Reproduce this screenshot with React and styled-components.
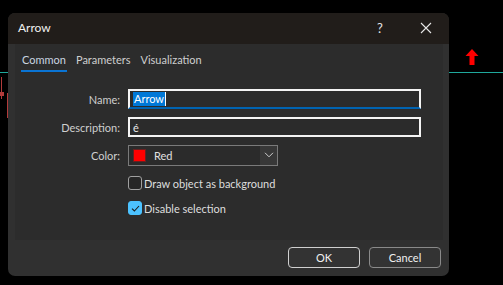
import React from "react";
import styled, { createGlobalStyle } from "styled-components";

const GlobalStyle = createGlobalStyle`
  html, body {
    margin: 0;
    background: #000;
    overflow: hidden;
  }
  * {
    box-sizing: border-box;
  }
`;

function ChartBackdrop() {
  return (
    <Chart width="503" height="285" viewBox="0 0 503 285">
      <line x1="0" y1="72.5" x2="503" y2="72.5" stroke="#1fa89c" strokeWidth="1" />
      <line x1="1.5" y1="77" x2="1.5" y2="99" stroke="#b23b3b" strokeWidth="1" />
      <rect x="0" y="92" width="4" height="4" fill="#b23b3b" />
      <rect x="7" y="93" width="2" height="25" fill="#b23b3b" />
      <path d="M472 49 L478.5 56 L474.5 56 L474.5 65 L469.5 65 L469.5 56 L465.5 56 Z" fill="#ff0000" />
    </Chart>
  );
}

function CloseIcon() {
  return (
    <svg width="12" height="12" viewBox="0 0 12 12">
      <path d="M1 1 L11 11 M11 1 L1 11" stroke="#e6e6e6" strokeWidth="1.1" />
    </svg>
  );
}

function Chevron() {
  return (
    <svg width="10" height="6" viewBox="0 0 10 6">
      <path d="M1 0.8 L5 4.8 L9 0.8" stroke="#cfcfcf" strokeWidth="1" fill="none" />
    </svg>
  );
}

function CheckMark() {
  return (
    <svg width="9" height="7" viewBox="0 0 9 7">
      <path d="M1 3.6 L3.4 6 L8 1" stroke="#1a1a1a" strokeWidth="1.1" fill="none" />
    </svg>
  );
}

export default function App() {
  return (
    <>
      <GlobalStyle />
      <Desktop>
        <ChartBackdrop />
        <Dialog>
          <TitleBar>
            <Title>Arrow</Title>
            <TitleButtons>
              <HelpButton>?</HelpButton>
              <CloseButton>
                <CloseIcon />
              </CloseButton>
            </TitleButtons>
          </TitleBar>
          <Panel>
            <Tabs>
              <Tab active>Common</Tab>
              <Tab>Parameters</Tab>
              <Tab>Visualization</Tab>
            </Tabs>
            <Form>
              <Label>Name:</Label>
              <TextField focused>
                <Selected>Arrow</Selected>
              </TextField>
              <Label>Description:</Label>
              <TextField>é</TextField>
              <Label>Color:</Label>
              <Select>
                <Swatch color="#ff0000" />
                <SelectText>Red</SelectText>
                <SelectArrow>
                  <Chevron />
                </SelectArrow>
              </Select>
              <span />
              <CheckRow>
                <CheckBox />
                <CheckLabel>Draw object as background</CheckLabel>
              </CheckRow>
              <span />
              <CheckRow>
                <CheckBox checked>
                  <CheckMark />
                </CheckBox>
                <CheckLabel>Disable selection</CheckLabel>
              </CheckRow>
            </Form>
          </Panel>
          <Footer>
            <Button primary>OK</Button>
            <Button>Cancel</Button>
          </Footer>
        </Dialog>
      </Desktop>
    </>
  );
}

const Desktop = styled.div`
  position: relative;
  width: 503px;
  height: 285px;
  background: #000;
  font-family: Lato, "Liberation Sans", sans-serif;
  font-size: 11px;
  color: #d6d6d6;
`;

const Chart = styled.svg`
  position: absolute;
  left: 0;
  top: 0;
`;

const Dialog = styled.div`
  position: absolute;
  left: 8px;
  top: 13px;
  width: 441px;
  height: 263px;
  border-radius: 7px;
  background: #303030;
  overflow: hidden;
  display: flex;
  flex-direction: column;
`;

const TitleBar = styled.div`
  height: 31px;
  flex: none;
  background: #211d1a;
  display: flex;
  align-items: center;
  justify-content: space-between;
  padding: 0 0 0 10px;
`;

const Title = styled.div`
  font-size: 12px;
  color: #f0f0f0;
  margin-top: -2px;
`;

const TitleButtons = styled.div`
  display: flex;
  align-items: center;
  height: 100%;
`;

const HelpButton = styled.div`
  width: 46px;
  text-align: center;
  font-size: 13px;
  color: #e6e6e6;
  margin-top: -2px;
`;

const CloseButton = styled.div`
  width: 46px;
  display: flex;
  justify-content: center;
  margin-top: -2px;
`;

const Panel = styled.div`
  margin: 0 6px 0 7px;
  height: 196px;
  flex: none;
  background: #2c2c2c;
  display: flex;
  flex-direction: column;
`;

const Tabs = styled.div`
  display: flex;
  gap: 8px;
  padding: 9px 0 0 6px;
  height: 28px;
`;

const Tab = styled.div`
  font-size: 11px;
  color: ${(p) => (p.active ? "#c9d5e0" : "#cfcfcf")};
  padding: 0 1px;
  height: 19px;
  border-bottom: 2px solid ${(p) => (p.active ? "#0a74d4" : "transparent")};
`;

const Form = styled.div`
  display: grid;
  grid-template-columns: 105px 293px;
  grid-template-rows: repeat(4, 20px) 14px;
  column-gap: 8px;
  row-gap: 8px;
  margin-top: 17px;
  align-items: center;
`;

const Label = styled.div`
  text-align: right;
  color: #cfcfcf;
`;

const TextField = styled.div`
  height: 20px;
  border: 2px solid #f4f4f4;
  border-bottom: 2px solid ${(p) => (p.focused ? "#0063b1" : "#f4f4f4")};
  background: #2b2b2b;
  padding: 0 3px;
  display: flex;
  align-items: center;
  color: #e8e8e8;
`;

const Selected = styled.span`
  background: #0078d7;
  color: #fff;
  line-height: 14px;
  padding: 0 1px;
  border-right: 1px solid #fff;
`;

const Select = styled.div`
  width: 150px;
  height: 21px;
  border: 1px solid #7a7a7a;
  background: #2b2b2b;
  display: flex;
  align-items: center;
  padding-left: 4px;
`;

const Swatch = styled.span`
  width: 13px;
  height: 13px;
  background: ${(p) => p.color};
  border: 1px solid #6a2020;
`;

const SelectText = styled.span`
  margin-left: 8px;
  flex: 1;
  color: #e0e0e0;
`;

const SelectArrow = styled.span`
  width: 17px;
  height: 100%;
  background: #383838;
  display: flex;
  align-items: center;
  justify-content: center;
`;

const CheckRow = styled.div`
  display: flex;
  align-items: center;
  gap: 2px;
`;

const CheckBox = styled.span`
  width: 14px;
  height: 14px;
  border-radius: 3px;
  border: 1px solid ${(p) => (p.checked ? "#4cc2ff" : "#a0a0a0")};
  background: ${(p) => (p.checked ? "#4cc2ff" : "#262626")};
  display: flex;
  align-items: center;
  justify-content: center;
`;

const CheckLabel = styled.span`
  color: #dedede;
`;

const Footer = styled.div`
  display: flex;
  justify-content: flex-end;
  gap: 9px;
  padding: 7px 8px 0 0;
`;

const Button = styled.div`
  width: 72px;
  height: 21px;
  border-radius: 4px;
  border: 1px solid ${(p) => (p.primary ? "#d0d0d0" : "#8a8a8a")};
  background: #333333;
  color: #f0f0f0;
  display: flex;
  align-items: center;
  justify-content: center;
`;
